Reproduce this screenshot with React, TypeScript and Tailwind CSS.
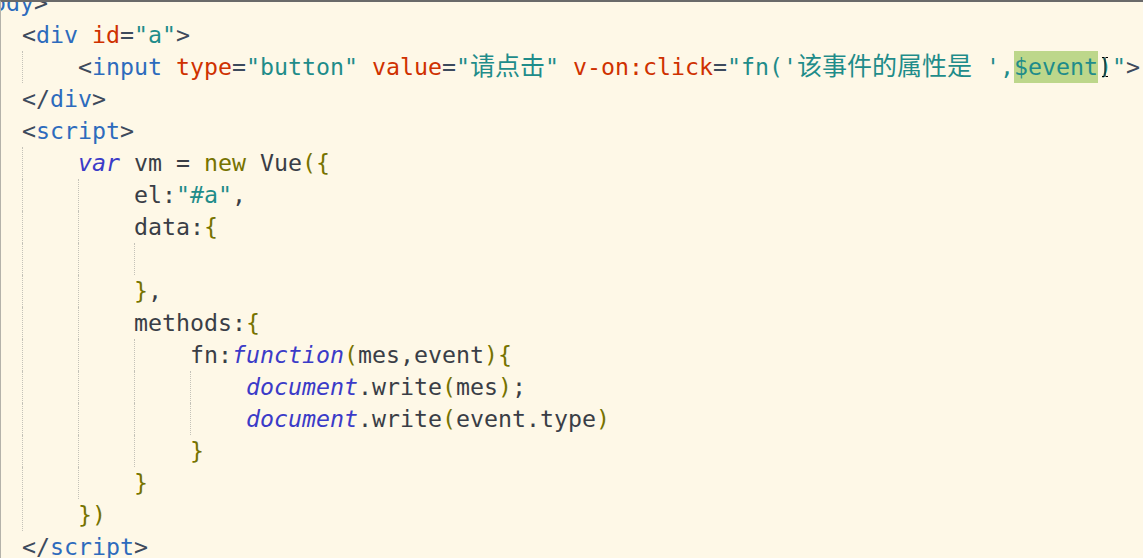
import type { FC, ReactNode } from "react";

// token helpers
const Sl: FC<{ children: ReactNode }> = ({ children }) => <span className="text-[#3d4a5c]">{children}</span>;
const Tag: FC<{ children: ReactNode }> = ({ children }) => <span className="text-[#2d6bbd]">{children}</span>;
const Attr: FC<{ children: ReactNode }> = ({ children }) => <span className="text-[#cf3100]">{children}</span>;
const Str: FC<{ children: ReactNode }> = ({ children }) => <span className="text-[#1f8c8a]">{children}</span>;
const Kw: FC<{ children: ReactNode }> = ({ children }) => <span className="italic text-[#3b3bc8]">{children}</span>;
const Ol: FC<{ children: ReactNode }> = ({ children }) => <span className="text-[#767300]">{children}</span>;
const Tx: FC<{ children: ReactNode }> = ({ children }) => <span className="text-[#3a3e46]">{children}</span>;
const Cjk: FC<{ children: ReactNode }> = ({ children }) => (
  <span className="font-['Noto_Sans_CJK_SC',sans-serif] text-[25px] leading-none text-[#1f8c8a]">{children}</span>
);

const LINES: { level: number; code: ReactNode }[] = [
  {
    level: 0,
    code: (
      <>
        <Sl>&lt;</Sl>
        <Tag>div</Tag> <Attr>id</Attr>
        <Sl>=</Sl>
        <Str>"a"</Str>
        <Sl>&gt;</Sl>
      </>
    ),
  },
  {
    level: 1,
    code: (
      <>
        <Sl>&lt;</Sl>
        <Tag>input</Tag> <Attr>type</Attr>
        <Sl>=</Sl>
        <Str>"button"</Str> <Attr>value</Attr>
        <Sl>=</Sl>
        <Str>"</Str>
        <Cjk>请点击</Cjk>
        <Str>"</Str> <Attr>v-on:click</Attr>
        <Sl>=</Sl>
        <Str>"fn('</Str>
        <Cjk>该事件的属性是</Cjk>
        <Str>{" ',"}</Str>
        <span className="inline-block bg-[#bdd78b] leading-8 text-[#1f8c8a]">$event</span>
        <Str>)"</Str>
        <Sl>&gt;</Sl>
      </>
    ),
  },
  {
    level: 0,
    code: (
      <>
        <Sl>&lt;/</Sl>
        <Tag>div</Tag>
        <Sl>&gt;</Sl>
      </>
    ),
  },
  {
    level: 0,
    code: (
      <>
        <Sl>&lt;</Sl>
        <Tag>script</Tag>
        <Sl>&gt;</Sl>
      </>
    ),
  },
  {
    level: 1,
    code: (
      <>
        <Kw>var</Kw> <Tx>vm =</Tx> <Ol>new</Ol> <Tx>Vue</Tx>
        <Ol>({"{"}</Ol>
      </>
    ),
  },
  {
    level: 2,
    code: (
      <>
        <Tx>el:</Tx>
        <Str>"#a"</Str>
        <Tx>,</Tx>
      </>
    ),
  },
  {
    level: 2,
    code: (
      <>
        <Tx>data:</Tx>
        <Ol>{"{"}</Ol>
      </>
    ),
  },
  { level: 3, code: null },
  {
    level: 2,
    code: (
      <>
        <Ol>{"}"}</Ol>
        <Tx>,</Tx>
      </>
    ),
  },
  {
    level: 2,
    code: (
      <>
        <Tx>methods:</Tx>
        <Ol>{"{"}</Ol>
      </>
    ),
  },
  {
    level: 3,
    code: (
      <>
        <Tx>fn:</Tx>
        <Kw>function</Kw>
        <Ol>(</Ol>
        <Tx>mes,event</Tx>
        <Ol>){"{"}</Ol>
      </>
    ),
  },
  {
    level: 4,
    code: (
      <>
        <Kw>document</Kw>
        <Tx>.write</Tx>
        <Ol>(</Ol>
        <Tx>mes</Tx>
        <Ol>)</Ol>
        <Tx>;</Tx>
      </>
    ),
  },
  {
    level: 4,
    code: (
      <>
        <Kw>document</Kw>
        <Tx>.write</Tx>
        <Ol>(</Ol>
        <Tx>event.type</Tx>
        <Ol>)</Ol>
      </>
    ),
  },
  { level: 3, code: <Ol>{"}"}</Ol> },
  { level: 2, code: <Ol>{"}"}</Ol> },
  { level: 1, code: <Ol>{"})"}</Ol> },
  {
    level: 0,
    code: (
      <>
        <Sl>&lt;/</Sl>
        <Tag>script</Tag>
        <Sl>&gt;</Sl>
      </>
    ),
  },
];

const CodeLine: FC<{ level: number; children: ReactNode }> = ({ level, children }) => (
  <div className="flex h-8 shrink-0 items-stretch whitespace-pre pl-[21px]">
    {Array.from({ length: level }).map((_, i) => (
      <div key={i} className="w-[56px] shrink-0 border-l border-dotted border-l-[#c4c2b8]" />
    ))}
    <div className="leading-8">{children}</div>
  </div>
);

export default function App() {
  return (
    <div className="relative h-[558px] w-[1143px] overflow-hidden border-t-2 border-l border-t-[#6a6a6a] border-l-[#b4b2aa] bg-[#fef8e7] font-['DejaVu_Sans_Mono','Noto_Sans_CJK_SC',monospace] text-[23.25px]">
      <div className="mt-[-15px] flex flex-col">
        <div className="flex h-8 shrink-0 whitespace-pre pl-[21px] leading-8">
          <div className="ml-[-58px]">
            <Sl>&lt;</Sl>
            <Tag>body</Tag>
            <Sl>&gt;</Sl>
          </div>
        </div>
        {LINES.map((line, idx) => (
          <CodeLine key={idx} level={line.level}>
            {line.code}
          </CodeLine>
        ))}
      </div>

      {/* mouse I-beam over the closing paren */}
      <svg className="absolute left-[1099px] top-[54px]" width="10" height="22" viewBox="0 0 10 22">
        <path d="M2 1.5h2.5M5.5 1.5H8M5 2v18M2 20.5h2.5M5.5 20.5H8" stroke="#000" strokeWidth="1" fill="none" />
      </svg>
    </div>
  );
}
